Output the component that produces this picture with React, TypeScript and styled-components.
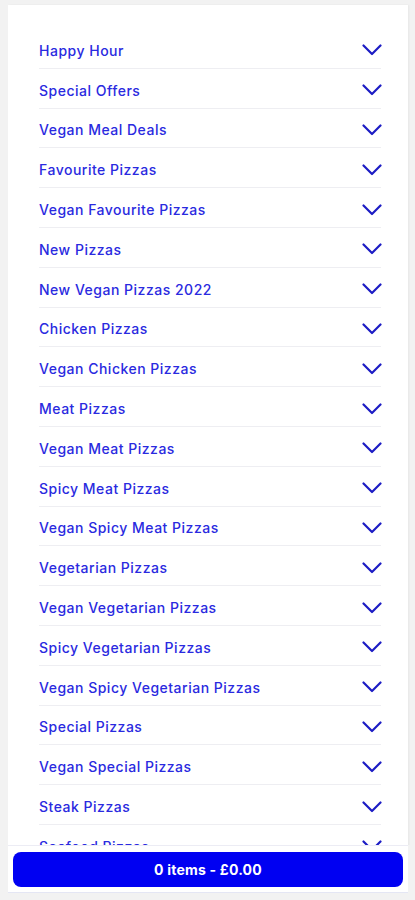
import React from "react";
import styled, { createGlobalStyle } from "styled-components";

const categories = [
  "Happy Hour",
  "Special Offers",
  "Vegan Meal Deals",
  "Favourite Pizzas",
  "Vegan Favourite Pizzas",
  "New Pizzas",
  "New Vegan Pizzas 2022",
  "Chicken Pizzas",
  "Vegan Chicken Pizzas",
  "Meat Pizzas",
  "Vegan Meat Pizzas",
  "Spicy Meat Pizzas",
  "Vegan Spicy Meat Pizzas",
  "Vegetarian Pizzas",
  "Vegan Vegetarian Pizzas",
  "Spicy Vegetarian Pizzas",
  "Vegan Spicy Vegetarian Pizzas",
  "Special Pizzas",
  "Vegan Special Pizzas",
  "Steak Pizzas",
  "Seafood Pizzas",
];

const GlobalStyle = createGlobalStyle`
  html, body {
    margin: 0;
    padding: 0;
    background: #f2f2f2;
    font-family: Inter, "Liberation Sans", sans-serif;
  }
`;

const Page = styled.div`
  height: 900px;
  box-sizing: border-box;
  overflow: hidden;
  padding: 5px 7px 0 8px;
`;

const Card = styled.div`
  background: #ffffff;
  height: 100%;
  box-sizing: border-box;
  padding: 24px 27px 0 31px;
  box-shadow: 1px 0 2px rgba(0, 0, 0, 0.05);
`;

const List = styled.ul`
  list-style: none;
  margin: 0;
  padding: 0;
`;

const Row = styled.li`
  display: flex;
  align-items: center;
  justify-content: space-between;
  height: 39.8px;
  box-sizing: border-box;
  padding: 4px 0 0;
  border-bottom: 1px solid #eeeef2;
`;

const Label = styled.span`
  color: #2a2ae0;
  font-size: 14px;
  font-weight: 500;
  letter-spacing: 0.5px;
`;

const Chevron = styled.svg`
  width: 20px;
  height: 12px;
  margin-right: -1px;
  flex-shrink: 0;
`;

const FooterBar = styled.div`
  position: fixed;
  left: 0;
  right: 0;
  bottom: 0;
  padding: 0 7px 7px 8px;
  background: #f2f2f2;
`;

const FooterPanel = styled.div`
  background: #ffffff;
  border-top: 1px solid #ececf4;
  border-bottom: 1px solid #e4e6f4;
  padding: 6px 5px 5px;
`;

const BasketButton = styled.button`
  display: block;
  width: 100%;
  height: 35px;
  border: none;
  border-radius: 8px;
  background: #0000f2;
  color: #ffffff;
  font-family: Inter, "Liberation Sans", sans-serif;
  font-size: 14px;
  font-weight: 700;
  letter-spacing: 0.2px;
  cursor: pointer;
`;

function ChevronDown() {
  return (
    <Chevron viewBox="0 0 20 12" fill="none">
      <path
        d="M1.5 1.5 L10 10 L18.5 1.5"
        stroke="#1c1cc4"
        strokeWidth="2.2"
        strokeLinecap="round"
        strokeLinejoin="round"
      />
    </Chevron>
  );
}

export default function App() {
  return (
    <>
      <GlobalStyle />
      <Page>
        <Card>
          <List>
            {categories.map((name) => (
              <Row key={name}>
                <Label>{name}</Label>
                <ChevronDown />
              </Row>
            ))}
          </List>
        </Card>
      </Page>
      <FooterBar>
        <FooterPanel>
          <BasketButton>0 items - £0.00</BasketButton>
        </FooterPanel>
      </FooterBar>
    </>
  );
}
